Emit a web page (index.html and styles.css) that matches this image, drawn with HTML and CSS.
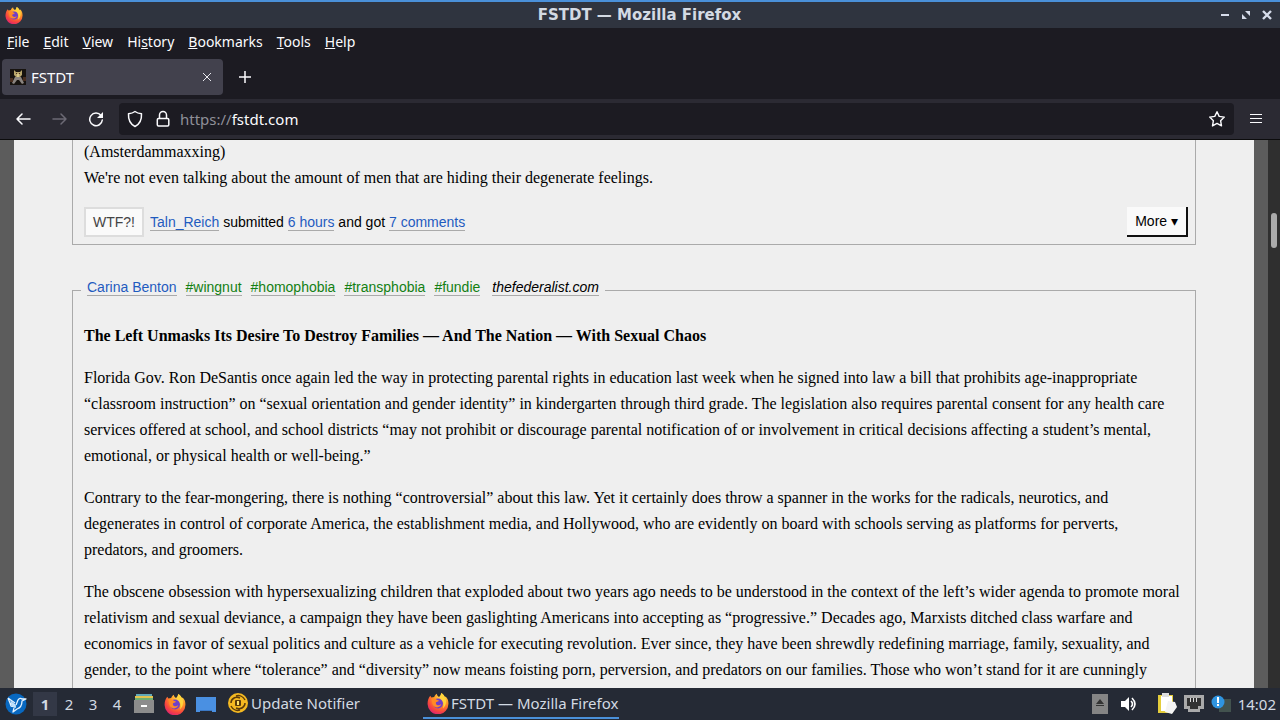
FILE: index.html
```
<!DOCTYPE html>
<html lang="en">
<head>
	<meta charset="utf-8">
	<title>FSTDT — Mozilla Firefox</title>
	<link rel="stylesheet" href="styles.css">
</head>
<body>
	<!-- shared icons -->
	<svg class="defs" width="0" height="0">
		<defs>
			<radialGradient id="flame" cx="70%" cy="15%" r="95%">
				<stop offset="0" stop-color="#ffe54a"/>
				<stop offset=".45" stop-color="#ff9227"/>
				<stop offset=".75" stop-color="#f8473d"/>
				<stop offset="1" stop-color="#d91e78"/>
			</radialGradient>
			<symbol id="firefox" viewBox="0 0 20 20">
				<path fill="url(#flame)" d="M13 1c2 1 3 3 3 4l1-1c2 2 2.500 4 2.500 6.500A9.500 9.500 0 0 1 .5 11C.5 8 1.500 5 3 3.500L4 5l2.500-.5C7 3 8 2 9 1.500c0 1.500 1 2.500 2 3 1-1 2-2 2-3.500z"/>
				<circle cx="10" cy="10.500" r="4.500" fill="#7040c8"/>
				<path fill="#ff8a25" d="M4 6c2-1 4 0 5 1l2 1c-1 1-3 1-3 2 0 2 3 3 5 1-1 4-7 4-8 0z"/>
				<path fill="#ffd43c" d="M13 1c4 3 5 6 4 10-.5 2-1.500 3-2.500 4 1-4 .5-6-1-8C12 5 12 3 13 1z"/>
			</symbol>
		</defs>
	</svg>

	<header class="chrome">
		<div class="titlebar">
			<svg class="icon18" viewBox="0 0 20 20"><use href="#firefox"/></svg>
			<span class="title">FSTDT — Mozilla Firefox</span>
			<div class="winbtns">
				<button type="button" aria-label="Minimize"><svg width="10" height="10"><path fill="#d6dcea" d="M1 4h8v2H1z"/></svg></button>
				<button type="button" aria-label="Restore"><svg width="10" height="10"><path fill="#d6dcea" d="M4 1h5v5zM1 4l5 5H1z"/></svg></button>
				<button type="button" aria-label="Close"><svg width="10" height="10"><path stroke="#d6dcea" stroke-width="2.400" d="M1 1l8 8M9 1l-8 8"/></svg></button>
			</div>
		</div>
		<nav class="menubar">
			<button type="button"><u>F</u>ile</button>
			<button type="button"><u>E</u>dit</button>
			<button type="button"><u>V</u>iew</button>
			<button type="button">Hi<u>s</u>tory</button>
			<button type="button"><u>B</u>ookmarks</button>
			<button type="button"><u>T</u>ools</button>
			<button type="button"><u>H</u>elp</button>
		</nav>
		<div class="tabbar">
			<div class="tab">
				<svg width="16" height="16" viewBox="0 0 16 16">
					<path fill="#17130f" d="M0 0h16v16H0z"/>
					<path fill="#b8a56a" d="M4 1l2 2h4l2-2v5l-2 2H6L4 6z"/>
					<path fill="#8b8580" d="M5 8h6l3 6-2 1-3-4h-2l-3 4-2-1z"/>
					<path fill="#4a2f20" d="M0 9h3v4H0zM13 8h3v4h-3zM6 4h1v1H6zM9 4h1v1H9z"/>
					<path fill="#d8c98c" d="M7 5h2v3H7z"/>
				</svg>
				<span class="tabname">FSTDT</span>
				<button type="button" aria-label="Close tab"><svg width="10" height="10"><path stroke="#e8e8ee" d="M1 1l8 8M9 1l-8 8"/></svg></button>
			</div>
			<button type="button" class="newtab" aria-label="New tab"><svg width="12" height="12"><path stroke="#fbfbfe" stroke-width="1.500" d="M6 0v12M0 6h12"/></svg></button>
		</div>
		<div class="navbar">
			<button type="button" aria-label="Back"><svg width="16" height="16" fill="none" stroke="#fbfbfe" stroke-width="1.500" stroke-linecap="round" stroke-linejoin="round"><path d="M14 8H1M6 3L1 8l5 5"/></svg></button>
			<button type="button" aria-label="Forward"><svg width="16" height="16" fill="none" stroke="#6c6a75" stroke-width="1.500" stroke-linecap="round" stroke-linejoin="round"><path d="M1 8h13M9 3l5 5-5 5"/></svg></button>
			<button type="button" aria-label="Reload"><svg width="16" height="16" fill="none" stroke="#fbfbfe" stroke-width="1.500" stroke-linecap="round"><path d="M13 4.500A6.300 6.300 0 1 0 14.300 9"/><path fill="#fbfbfe" stroke="none" d="M15 1v6H9z"/></svg></button>
			<div class="urlbar">
				<svg width="16" height="18" fill="none" stroke="#fbfbfe" stroke-width="1.500" stroke-linejoin="round"><path d="M8 1.500c2 1.500 4 2 6.500 2.300C14.800 9 13 14 8 16.500 3 14 1.200 9 1.500 3.800 4 3.500 6 3 8 1.500z"/></svg>
				<svg width="16" height="18" fill="none" stroke="#fbfbfe" stroke-width="1.500"><rect x="2.300" y="8.500" width="11.500" height="7.500" rx="1.200"/><path d="M4.500 8.500V5a3.500 3.500 0 0 1 7 0v3.500"/></svg>
				<a class="url" href="https://fstdt.com"><span>https://</span>fstdt.com</a>
				<button type="button" aria-label="Bookmark this page"><svg width="18" height="18" fill="none" stroke="#fbfbfe" stroke-width="1.400" stroke-linejoin="round"><path d="M9 1.700l2.200 4.700 5.100.7-3.700 3.600.9 5.200L9 13.400l-4.500 2.500.9-5.200L1.700 7.100l5.100-.7z"/></svg></button>
			</div>
			<button type="button" class="burger" aria-label="Menu"><svg width="12" height="10"><path fill="#fbfbfe" d="M0 0h12v1H0zM0 4h12v1H0zM0 8h12v1H0z"/></svg></button>
		</div>
	</header>

	<div class="viewport">
		<main class="page">
			<article class="post first">
				<p>(Amsterdammaxxing)<br>We're not even talking about the amount of men that are hiding their degenerate feelings.</p>
				<footer class="meta">
					<button type="button" class="wtf">WTF?!</button>
					<span class="info"><a href="#">Taln_Reich</a> submitted <a href="#">6 hours</a> and got <a href="#">7 comments</a></span>
					<button type="button" class="more">More ▾</button>
				</footer>
			</article>

			<fieldset class="post">
				<legend>
					<a href="#">Carina Benton</a>
					<a href="#" class="tag">#wingnut</a>
					<a href="#" class="tag">#homophobia</a>
					<a href="#" class="tag">#transphobia</a>
					<a href="#" class="tag">#fundie</a>
					<a href="#" class="source">thefederalist.com</a>
				</legend>
				<h2>The Left Unmasks Its Desire To Destroy Families — And The Nation — With Sexual Chaos</h2>
				<p>Florida Gov. Ron DeSantis once again led the way in protecting parental rights in education last week when he signed into law a bill that prohibits age-inappropriate “classroom instruction” on “sexual orientation and gender identity” in kindergarten through third grade. The legislation also requires parental consent for any health care services offered at school, and school districts “may not prohibit or discourage parental notification of or involvement in critical decisions affecting a student’s mental, emotional, or physical health or well-being.”</p>
				<p>Contrary to the fear-mongering, there is nothing “controversial” about this law. Yet it certainly does throw a spanner in the works for the radicals, neurotics, and degenerates in control of corporate America, the establishment media, and Hollywood, who are evidently on board with schools serving as platforms for perverts, predators, and groomers.</p>
				<p>The obscene obsession with hypersexualizing children that exploded about two years ago needs to be understood in the context of the left’s wider agenda to promote moral relativism and sexual deviance, a campaign they have been gaslighting Americans into accepting as “progressive.” Decades ago, Marxists ditched class warfare and economics in favor of sexual politics and culture as a vehicle for executing revolution. Ever since, they have been shrewdly redefining marriage, family, sexuality, and gender, to the point where “tolerance” and “diversity” now means foisting porn, perversion, and predators on our families. Those who won’t stand for it are cunningly</p>
			</fieldset>
		</main>
		<div class="scrollbar"><div class="thumb"></div></div>
	</div>

	<footer class="taskbar">
		<button type="button" class="start" aria-label="Menu">
			<svg width="22" height="22" viewBox="0 0 22 22"><circle cx="11" cy="11" r="10.500" fill="#0868c0"/><path fill="none" stroke="#e6f3ff" stroke-width="1.300" stroke-linejoin="round" d="M3 5l7 5M3 5l2 5 5 3M5 10l1 3 5 1M11 12l2-5c1-2 3-2 4-1l4 0-4 2c0 5-2 7-5 8l-4 3 1-4"/><path fill="#bfe0fa" d="M5 7l6 5-1 3-3-2z"/></svg>
		</button>
		<div class="desks">
			<button type="button" class="on">1</button>
			<button type="button">2</button>
			<button type="button">3</button>
			<button type="button">4</button>
		</div>
		<div class="launch">
			<button type="button" aria-label="Files"><svg width="22" height="22"><path fill="#5fa8b8" d="M3 1h16v4H3z"/><path fill="#e2c34f" d="M2 3h18v4H2z"/><path fill="#6eae72" d="M2 5h18v3H2z"/><path fill="#8c8c8c" d="M1 7h20v13H1z"/><path fill="#fff" d="M8 12h6v2H8z"/></svg></button>
			<button type="button" aria-label="Firefox"><svg width="22" height="22"><use href="#firefox"/></svg></button>
			<button type="button" aria-label="Show desktop"><svg width="22" height="22"><path fill="#4a90e2" d="M1 4h20v13H1z"/><path fill="#4a90e2" d="M1 17h4v2H1zM17 17h4v2h-4z"/><path fill="#3b78c4" d="M5 17h12v1H5z"/></svg></button>
		</div>
		<div class="tasks">
			<button type="button" class="task">
				<svg width="22" height="22" fill="none"><circle cx="11" cy="11" r="10" fill="#f5b921"/><path stroke="#5b3b0b" stroke-width="1.500" d="M4 11c0-4 4-7 9-5M18 11c0 4-4 7-9 5M4 14c2 4 6 5 9 4M18 8c-2-4-6-5-9-4"/><rect x="8" y="8" width="6" height="6" rx="1" fill="#5b3b0b"/><path fill="#ffe36a" d="M10 9h2v4h-2z"/></svg>
				Update Notifier
			</button>
			<button type="button" class="task active">
				<svg width="22" height="22"><use href="#firefox"/></svg>
				FSTDT — Mozilla Firefox
			</button>
		</div>
		<div class="tray">
			<svg width="16" height="20"><path fill="#858585" d="M0 0h16v20H0z"/><path fill="#333" d="M8 5l4 5H4zM4 11h8v1H4z"/></svg>
			<svg width="18" height="18" class="sound"><path fill="#fff" d="M1 6h4l4-4v14l-4-4H1z"/><path fill="none" stroke="#fff" stroke-width="1.600" d="M11 6q3 3 0 6M12 3q6 6 0 12"/></svg>
			<svg width="20" height="22"><path fill="#e4cd3b" d="M1 2h15v18H1z"/><path fill="#fff" d="M4 3h11v15H4z"/><path fill="#ddd" d="M5 0h7v4H5z"/><path fill="#f4f4f4" d="M11 8l7 1 2 5-5 7-7-2z"/></svg>
			<svg width="20" height="18"><path fill="#aaa" d="M0 0h20v14h-4v3H4v-3H0z"/><path fill="#333" d="M3 3h14v8h-3v3H6v-3H3z"/><path stroke="#ddd" d="M6.500 3v4M9.500 3v4M12.500 3v4"/></svg>
			<svg width="20" height="20"><path fill="#42524e" d="M8 5h12v13H8z"/><circle cx="7" cy="8" r="6.500" fill="#2f94e0"/><path fill="#fff" d="M6 3h2v6H6zM6 10h2v2H6z"/></svg>
			<time>14:02</time>
		</div>
	</footer>
</body>
</html>
```

FILE: styles.css
```
*{margin: 0;padding: 0;box-sizing: border-box;}
body{
	height: 100vh;
	display: flex;
	flex-direction: column;
	overflow: hidden;
	background: #efefef;
	font-family: "Noto Sans", sans-serif;
}
button{
	border: 0;
	background: none;
	color: inherit;
	font: inherit;
	cursor: pointer;
}
svg{display: block;flex: none;}
.defs{position: absolute;}

/* browser window */
.chrome{
	flex: none;
	background: #1c1b22;
	color: #fbfbfe;
	font-size: 14px;
	box-shadow: 0 1px 0 #0c0c0d;
	z-index: 1;
}
.titlebar{
	display: flex;
	align-items: center;
	height: 28px;
	padding: 0 8px 0 5px;
	border-top: 2px solid #4a90d9;
	background: #2f343f;
	color: #d3dae3;
}
.icon18{width: 18px;height: 18px;}
.title{
	flex: 1;
	padding-left: 36px;
	text-align: center;
	font: bold 15px "DejaVu Sans", sans-serif;
}
.winbtns{display: flex;gap: 11px;}
.menubar{
	display: flex;
	gap: 14px;
	height: 26px;
	padding: 0 7px;
}
.tabbar{
	display: flex;
	align-items: center;
	height: 45px;
	padding: 0 2px;
}
.tab{
	display: flex;
	align-items: center;
	gap: 5px;
	width: 221px;
	height: 36px;
	padding: 0 11px 0 8px;
	border-radius: 4px;
	background: #42414d;
}
.tabname{flex: 1;font-size: 15px;}
.newtab{padding: 0 16px;}
.navbar{
	display: flex;
	align-items: center;
	gap: 20px;
	height: 40px;
	padding: 0 18px 0 16px;
	background: #2b2a33;
}
.urlbar{
	flex: 1;
	display: flex;
	align-items: center;
	gap: 12px;
	height: 32px;
	margin-left: -5px;
	padding: 0 8px;
	border-radius: 4px;
	background: #1c1b22;
}
.url{
	flex: 1;
	margin-left: -3px;
	color: #fbfbfe;
	font-size: 15px;
	text-decoration: none;
}
.url span{color: #8f8f98;}
.burger{margin-left: -4px;}

/* web page */
.viewport{
	flex: 1;
	min-height: 0;
	display: flex;
	overflow: hidden;
	background: #5c5c5c;
}
.page{
	flex: 1;
	height: 800px;
	margin: 0 14px;
	padding: 0 58px;
	background: #efefef;
	color: #000;
	font: 16px/26px "Liberation Serif", serif;
}
.post{
	min-width: 0;
	margin-top: 32px;
	padding: 0 11px 40px;
	border: 1px solid #aaa;
}
.post.first{
	margin-top: 0;
	padding: 0 7px 7px 11px;
	border-top: 0;
}
.post p, .post h2{margin-bottom: 16px;}
.post h2{font-size: 16px;}
.meta, legend{
	font-family: "Liberation Sans", sans-serif;
	font-size: 14px;
}
.meta{
	display: flex;
	align-items: center;
	gap: 6px;
}
.meta button{
	height: 30px;
	padding: 0 8px;
	background: #fafafa;
}
.meta .wtf{
	padding: 0 7px;
	border: 2px solid #ddd;
	color: #444;
}
.info{flex: 1;}
.meta .more{
	border: solid #111;
	border-width: 0 2px 2px 0;
}
.meta a, legend a{
	border-bottom: 1px solid #aaa;
	color: #1f5bbf;
	text-decoration: none;
}
legend{
	display: flex;
	gap: 9px;
	height: 26px;
	margin: 0 0 20px -3px;
	padding: 0 6px;
	line-height: 20px;
}
legend a{height: 19px;}
legend .tag{color: #138013;}
legend .source{
	margin-left: 3px;
	color: #000;
	font-style: italic;
}
.scrollbar{
	width: 12px;
	padding: 74px 3px 0;
	background: #2f2f2f;
}
.thumb{
	height: 35px;
	border-radius: 3px;
	background: #aaa;
}

/* desktop panel */
.taskbar{
	flex: none;
	display: flex;
	align-items: center;
	height: 32px;
	padding: 0 4px 0 5px;
	background: #252a35;
	color: #d3dae3;
	font-size: 15px;
}
.desks{display: flex;margin-left: 6px;}
.desks button{width: 24px;height: 24px;}
.desks .on{background: #333846;font-weight: bold;}
.launch{display: flex;gap: 9px;margin: 0 6px 0 4px;}
.tasks{flex: 1;display: flex;gap: 4px;}
.task{
	display: flex;
	align-items: center;
	gap: 2px;
	width: 196px;
	height: 30px;
	padding-left: 4px;
	border-bottom: 2px solid transparent;
	white-space: nowrap;
}
.task.active{border-color: #4a90d9;}
.tray{
	display: flex;
	align-items: center;
	gap: 7px;
}
.sound{margin: 0 12px 0 5px;}
```
